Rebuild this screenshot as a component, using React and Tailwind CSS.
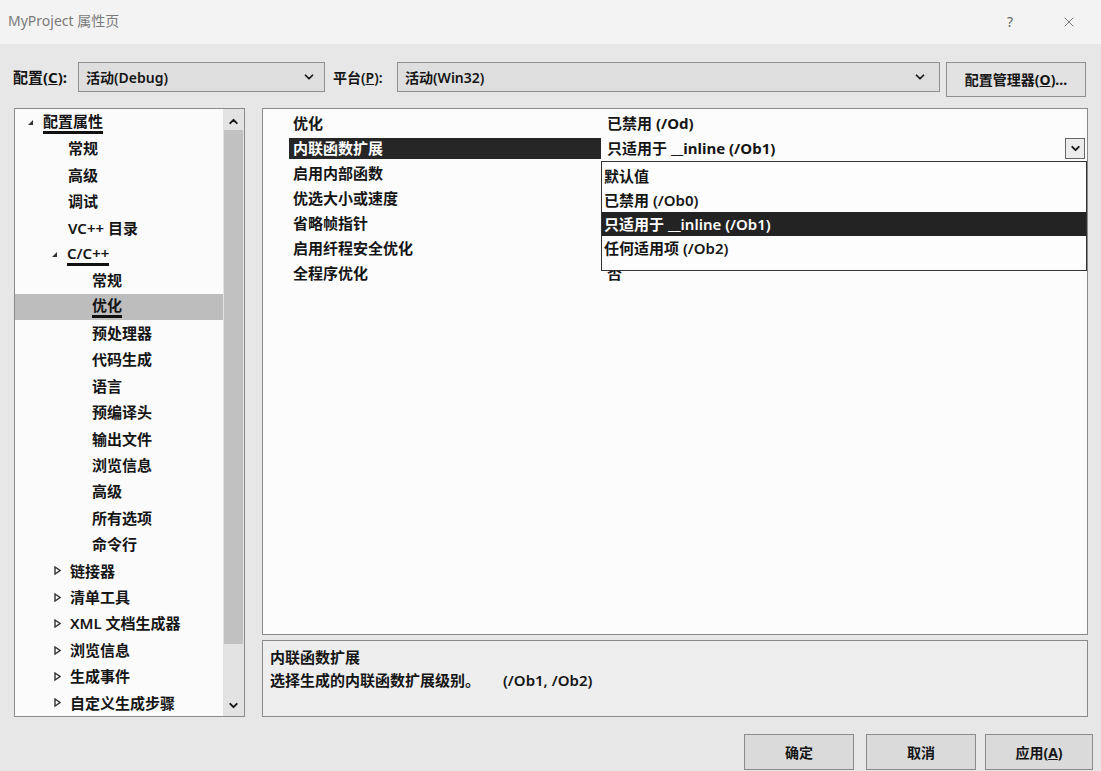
import { ChevronDown, ChevronUp, X } from "lucide-react";

const font = "font-['Noto_Sans','Noto_Sans_CJK_SC',sans-serif]";

const tree = [
  { label: "配置属性", indent: 43, arrow: "open", mark: true },
  { label: "常规", indent: 68 },
  { label: "高级", indent: 68 },
  { label: "调试", indent: 68 },
  { label: "VC++ 目录", indent: 68 },
  { label: "C/C++", indent: 67, arrow: "open", mark: true },
  { label: "常规", indent: 92 },
  { label: "优化", indent: 92, selected: true, mark: true },
  { label: "预处理器", indent: 92 },
  { label: "代码生成", indent: 92 },
  { label: "语言", indent: 92 },
  { label: "预编译头", indent: 92 },
  { label: "输出文件", indent: 92 },
  { label: "浏览信息", indent: 92 },
  { label: "高级", indent: 92 },
  { label: "所有选项", indent: 92 },
  { label: "命令行", indent: 92 },
  { label: "链接器", indent: 70, arrow: "closed" },
  { label: "清单工具", indent: 70, arrow: "closed" },
  { label: "XML 文档生成器", indent: 70, arrow: "closed" },
  { label: "浏览信息", indent: 70, arrow: "closed" },
  { label: "生成事件", indent: 70, arrow: "closed" },
  { label: "自定义生成步骤", indent: 70, arrow: "closed" },
];

const props = [
  { name: "优化", value: "已禁用 (/Od)", bold: true },
  { name: "内联函数扩展", value: "只适用于 __inline (/Ob1)", bold: true, active: true },
  { name: "启用内部函数", value: "" },
  { name: "优选大小或速度", value: "" },
  { name: "省略帧指针", value: "" },
  { name: "启用纤程安全优化", value: "" },
  { name: "全程序优化", value: "否" },
];

const options = ["默认值", "已禁用 (/Ob0)", "只适用于 __inline (/Ob1)", "任何适用项 (/Ob2)"];

function Arrow({ type }) {
  if (type === "open")
    return (
      <svg width="7" height="7" viewBox="0 0 7 7">
        <path d="M6 1 L6 6 L1 6 Z" fill="#333" />
      </svg>
    );
  return (
    <svg width="7" height="9" viewBox="0 0 7 9">
      <path d="M1 1 L6 4.5 L1 8 Z" fill="none" stroke="#333" strokeWidth="1.4" />
    </svg>
  );
}

export default function App() {
  return (
    <div className={`${font} w-[1101px] h-[771px] bg-[#e7e7e7] text-[#151515] flex flex-col overflow-hidden`}>
      <div className="h-[44px] bg-[#f3f3f3] flex items-center px-[8px] shrink-0">
        <span className="text-[14px] text-[#7a7a7a] -mt-[4px]">MyProject 属性页</span>
        <span className="ml-auto text-[14px] text-[#666] mr-[48px] -mt-[2px]">?</span>
        <X size={16} strokeWidth={1.2} className="text-[#555] mr-[16px]" />
      </div>

      <div className="flex items-start pl-[13px] pt-[18px] h-[64px] shrink-0">
        <span className="text-[15px] font-bold w-[65px] h-[30px] flex items-center">
          配置(<u>C</u>):
        </span>
        <div className="w-[247px] h-[30px] bg-[#dedede] border border-[#8f8f8f] flex items-center pl-[7px] pr-[8px]">
          <span className="text-[14px] font-semibold">活动(Debug)</span>
          <ChevronDown size={14} strokeWidth={3} className="ml-auto" />
        </div>
        <span className="text-[14px] font-semibold w-[72px] h-[30px] flex items-center pl-[8px]">
          平台(<u>P</u>):
        </span>
        <div className="w-[543px] h-[30px] bg-[#dedede] border border-[#8f8f8f] flex items-center pl-[7px] pr-[12px]">
          <span className="text-[14px] font-semibold">活动(Win32)</span>
          <ChevronDown size={14} strokeWidth={3} className="ml-auto" />
        </div>
        <div className="ml-[6px] w-[140px] h-[35px] bg-[#e2e2e2] border border-[#8f8f8f] flex items-center justify-center text-[14px] font-bold">
          配置管理器(<u>O</u>)...
        </div>
      </div>

      <div className="flex pl-[14px] h-[609px] shrink-0">
        <div className="w-[231px] h-full bg-[#fbfbfb] border border-[#8a8a8a] flex">
          <div className="flex-1 flex flex-col">
            {tree.map((t, i) => (
              <div
                key={i}
                className={`h-[26.4px] shrink-0 flex items-center text-[15px] font-semibold whitespace-nowrap ${t.selected ? "bg-[#bdbdbd]" : ""}`}
                style={{ paddingLeft: t.arrow ? t.indent - 15 - 16 : t.indent - 15 }}
              >
                {t.arrow && (
                  <span className="w-[16px] flex items-center">
                    <Arrow type={t.arrow} />
                  </span>
                )}
                <span className={t.mark ? "border-b-[3px] border-[#111] leading-[20px]" : ""}>{t.label}</span>
              </div>
            ))}
          </div>
          <div className="w-[21px] h-full bg-[#e3e3e3] flex flex-col items-center">
            <ChevronUp size={13} strokeWidth={3.5} className="mt-[6px] shrink-0" />
            <div className="w-[19px] h-[514px] bg-[#c1c1c1] mt-[2px]" />
            <ChevronDown size={13} strokeWidth={3.5} className="mt-auto mb-[4px] shrink-0" />
          </div>
        </div>

        <div className="ml-[17px] w-[826px] flex flex-col">
          <div className="h-[527px] bg-[#fcfcfc] border border-[#8a8a8a] relative pt-[2px]">
            {props.map((p, i) => (
              <div key={i} className="h-[25px] flex items-center text-[15px]">
                <div
                  className={`ml-[26px] w-[312px] h-[21px] flex items-center pl-[4px] font-semibold ${p.active ? "bg-[#262626] text-white" : ""}`}
                >
                  {p.name}
                </div>
                <div className={`flex-1 h-full flex items-center pl-[6px] pr-[2px] ${p.bold ? "font-bold" : "font-semibold"}`}>
                  {p.value}
                  {p.active && (
                    <div className="ml-auto w-[20px] h-[21px] border border-[#666] bg-[#ececec] flex items-center justify-center">
                      <ChevronDown size={13} strokeWidth={3.5} />
                    </div>
                  )}
                </div>
              </div>
            ))}

            <div className="absolute left-[338px] top-[52px] w-[486px] h-[110px] bg-[#fdfdfd] border border-[#333] pt-[2px]">
              {options.map((o, i) => (
                <div
                  key={i}
                  className={`h-[24px] flex items-center pl-[2px] text-[15px] font-semibold ${i === 2 ? "bg-[#232323] text-white" : ""}`}
                >
                  {o}
                </div>
              ))}
            </div>
          </div>

          <div className="mt-[5px] h-[77px] bg-[#eeeeee] border border-[#8a8a8a] px-[7px] pt-[5px] text-[15px]">
            <div className="font-bold h-[22px] flex items-center">内联函数扩展</div>
            <div className="font-semibold h-[24px] flex items-center">
              <span className="w-[233px]">选择生成的内联函数扩展级别。</span>
              <span>(/Ob1, /Ob2)</span>
            </div>
          </div>
        </div>
      </div>

      <div className="flex justify-end pt-[17px] pr-[8px] gap-[12px]">
        {["确定", "取消"].map((b) => (
          <div key={b} className="w-[110px] h-[36px] bg-[#dadada] border border-[#8a8a8a] flex items-center justify-center text-[14px] font-bold">
            {b}
          </div>
        ))}
        <div className="w-[108px] h-[36px] bg-[#dadada] border border-[#8a8a8a] flex items-center justify-center text-[14px] font-bold -ml-[3px]">
          应用(<u>A</u>)
        </div>
      </div>
    </div>
  );
}
